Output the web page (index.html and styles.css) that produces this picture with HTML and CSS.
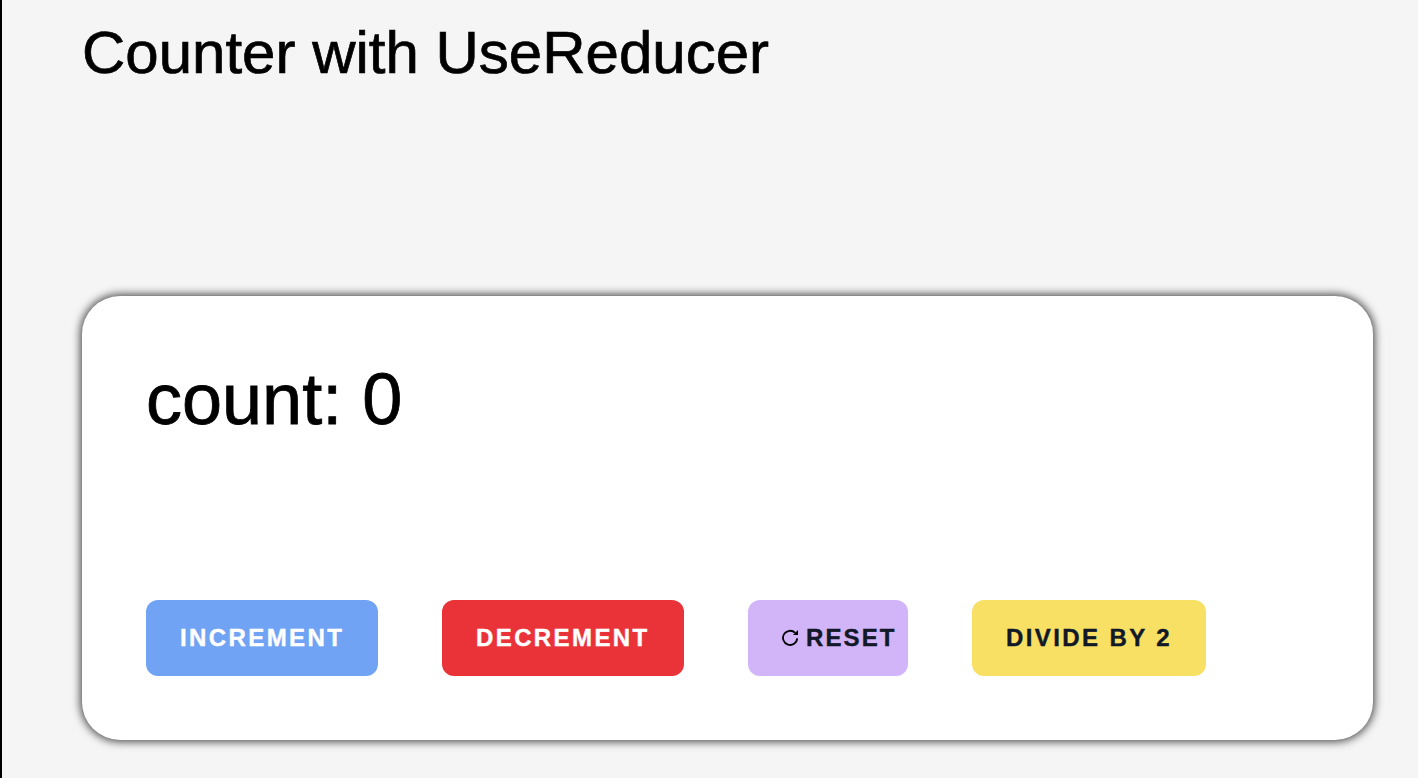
FILE: index.html
```
<!DOCTYPE html>
<html lang="en">
<head>
<meta charset="utf-8">
<title>Counter</title>
<link rel="stylesheet" href="styles.css">
</head>
<body>
<main class="page">
<h1 class="title">Counter with UseReducer</h1>
<section class="card">
<p class="count">count: 0</p>
<div class="actions">
<button class="btn increment">INCREMENT</button>
<button class="btn decrement">DECREMENT</button>
<button class="btn reset"><svg class="icon" viewBox="0 0 18 18"><path class="arc" d="M15.2 9.4A7.1 7.1 0 1 1 13.2 3.9"/><path class="head" d="M16 1v5h-5z"/></svg><span>RESET</span></button>
<button class="btn divide">DIVIDE BY 2</button>
</div>
</section>
</main>
</body>
</html>
```
FILE: styles.css
```
* { box-sizing: border-box; }
body { margin: 0; background: #f5f5f5; font-family: "Liberation Sans", Arial, sans-serif; color: #000; }
.page { height: 778px; border-left: 2px solid #000; padding: 17px 45px 0 80px; overflow: hidden; }
.title { margin: 0 0 207px; font-size: 60px; line-height: 72px; font-weight: 400; white-space: nowrap; -webkit-text-stroke: 0.7px #000; }
.card { height: 444px; padding: 63px 64px 64px; background: #fff; border-radius: 38px; box-shadow: 0 0 9px 2px rgba(0,0,0,.68); }
.count { margin: 0 0 161px; font-size: 72px; line-height: 80px; -webkit-text-stroke: 0.8px #000; }
.actions { display: flex; gap: 64px; }
.btn { display: flex; align-items: center; height: 76px; padding: 0 0 0 34px; border: 0; border-radius: 12px; font: 700 24px "Liberation Sans", Arial, sans-serif; letter-spacing: 2.4px; white-space: nowrap; color: #111827; -webkit-text-stroke: 0.4px currentColor; }
.increment { width: 232px; background: #70a3f3; color: #fff; }
.decrement { width: 242px; background: #ea3339; color: #fff; }
.reset { width: 160px; background: #d2b4f8; letter-spacing: 2.1px; }
.divide { width: 234px; background: #f7e064; }
.icon { width: 18px; height: 18px; margin-right: 6px; flex: none; }
.arc { fill: none; stroke: #000; stroke-width: 1.8; }
.head { fill: #000; }
```
